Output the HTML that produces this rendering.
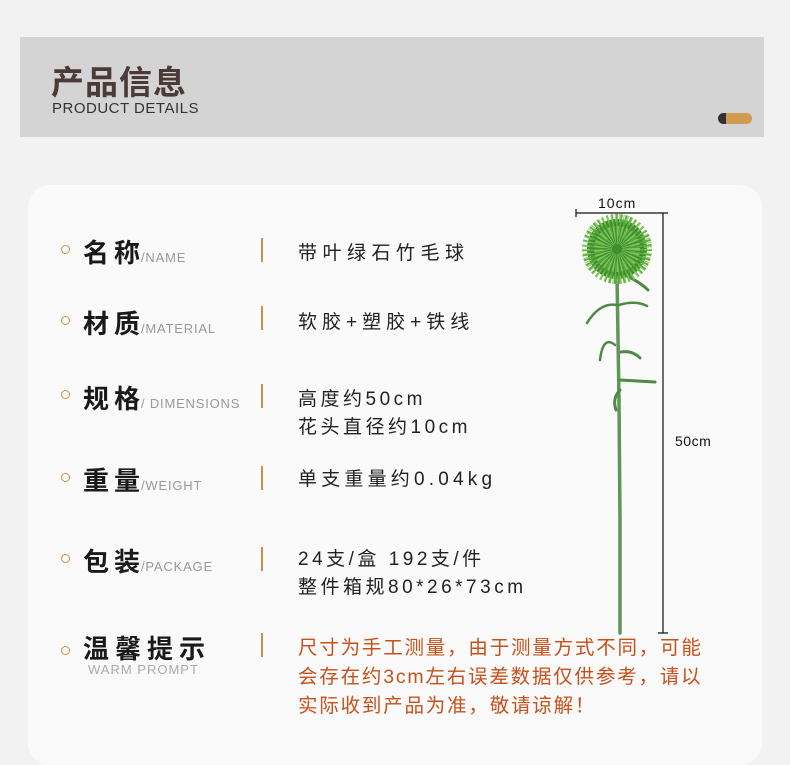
<!DOCTYPE html>
<html><head><meta charset="utf-8"><style>
body{margin:0;width:790px;height:739px;background:#f2f2f2;position:relative;overflow:hidden;font-family:"Liberation Sans","Noto Sans CJK SC",sans-serif}
.ban{position:absolute;left:20px;top:37px;width:744px;height:100px;background:#d4d4d4}
.t1{position:absolute;left:51px;top:65px;font-size:33px;line-height:36px;font-weight:bold;color:#4a3a38;letter-spacing:1px}
.t2{position:absolute;left:52px;top:101px;font-size:15px;line-height:16px;color:#333;letter-spacing:0.5px}
.pill{position:absolute;left:718px;top:113px;width:34px;height:11px;border-radius:6px;background:#d29a4e}
.pill:before{content:"";position:absolute;left:0;top:0;width:8px;height:11px;border-radius:6px 0 0 6px;background:#333}
.card{position:absolute;left:28px;top:185px;width:734px;height:580px;background:#fafafa;border-radius:22px}
.dot{position:absolute;left:61px;width:7px;height:7px;border:1px solid #c8914a;border-radius:50%}
.lab{position:absolute;left:83px;font-size:26px;font-weight:bold;color:#1a1a1a;letter-spacing:5px;white-space:nowrap}
.lab span{font-size:13px;font-weight:normal;color:#999;letter-spacing:0.8px;margin-left:-4px}
.sep{position:absolute;left:261px;width:2px;height:24px;background:#c8914a}
.val{position:absolute;left:298px;font-size:19px;color:#222;letter-spacing:3.5px;line-height:28px;white-space:nowrap}
.red{color:#c8501a;font-size:19.5px;letter-spacing:1.8px;line-height:29px}
</style></head><body>
<div class="ban"></div>
<div class="t1">产品信息</div>
<div class="t2">PRODUCT DETAILS</div>
<div class="pill"></div>
<div class="card"></div>

<div class="dot" style="top:245px"></div><div class="lab" style="top:233px">名称<span>/NAME</span></div><div class="sep" style="top:238px"></div><div class="val" style="top:240px;letter-spacing:5.5px">带叶绿石竹毛球</div>
<div class="dot" style="top:316px"></div><div class="lab" style="top:304px">材质<span>/MATERIAL</span></div><div class="sep" style="top:306px"></div><div class="val" style="top:309px;letter-spacing:5px">软胶+塑胶+铁线</div>
<div class="dot" style="top:390px"></div><div class="lab" style="top:379px">规格<span>/ DIMENSIONS</span></div><div class="sep" style="top:384px"></div><div class="val" style="top:386px">高度约50cm<br>花头直径约10cm</div>
<div class="dot" style="top:473px"></div><div class="lab" style="top:461px">重量<span>/WEIGHT</span></div><div class="sep" style="top:466px"></div><div class="val" style="top:466px;letter-spacing:4.2px">单支重量约0.04kg</div>
<div class="dot" style="top:554px"></div><div class="lab" style="top:542px">包装<span>/PACKAGE</span></div><div class="sep" style="top:547px"></div><div class="val" style="top:546px">24支/盒 192支/件<br>整件箱规80*26*73cm</div>
<div class="dot" style="top:646px"></div><div class="lab" style="top:629px;letter-spacing:6px">温馨提示</div><div style="position:absolute;left:88px;top:662px;font-size:13px;color:#aaa;letter-spacing:1px">WARM PROMPT</div><div class="sep" style="top:633px"></div>
<div class="val red" style="top:634px">尺寸为手工测量，由于测量方式不同，可能<br>会存在约3cm左右误差数据仅供参考，请以<br>实际收到产品为准，敬请谅解！</div>

<svg style="position:absolute;left:0;top:0" width="790" height="739">
<g stroke="#111" stroke-width="1.2" fill="none">
<path d="M576 213H662M576 209V217M662 213H668M663 213V633M658 633H668"/>
</g>
<text x="598" y="208" font-size="14" fill="#111" font-family="Liberation Sans" letter-spacing="1">10cm</text>
<text x="675" y="446" font-size="14" fill="#111" font-family="Liberation Sans" letter-spacing="0.5">50cm</text>
<g stroke="#4f8a45" fill="none" stroke-linecap="round">
<path d="M617 275 L619 400 L620 520 L620 633" stroke-width="3.5" stroke="#5f9658"/>
<path d="M617 305 Q600 302 587 323" stroke-width="2.5"/>
<path d="M619 305 Q635 300 647 306" stroke-width="2.5"/>
<path d="M615 345 Q603 335 600 360" stroke-width="2.5"/>
<path d="M621 352 Q632 350 640 358" stroke-width="3"/>
<path d="M620 380 L655 382" stroke-width="3"/>
<path d="M620 390 Q612 398 616 410" stroke-width="3"/>
<path d="M625 275 Q640 282 648 290" stroke-width="3"/>
</g>
<circle cx="617" cy="249" r="30" fill="#3f8e2f"/>
<circle cx="617" cy="249" r="24" fill="none" stroke="#5fae3f" stroke-width="22" stroke-dasharray="1.5 2"/>
<circle cx="617" cy="249" r="14" fill="none" stroke="#7cc65a" stroke-width="18" stroke-dasharray="1.2 1.8"/>
<circle cx="617" cy="249" r="31" fill="none" stroke="#8ccf68" stroke-width="8" stroke-dasharray="1 3"/>
</svg>
</body></html>
